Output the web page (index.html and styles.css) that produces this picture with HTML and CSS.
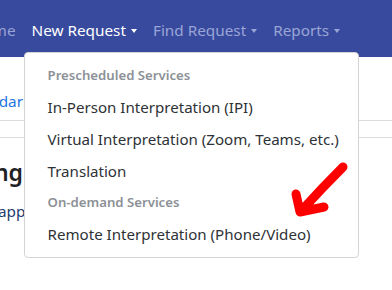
FILE: index.html
```html
<!DOCTYPE html>
<html lang="en">
<head>
<meta charset="utf-8">
<link rel="stylesheet" href="styles.css">
</head>
<body>
<nav class="navbar">
  <ul class="nav">
    <li class="nav-item home"><a class="nav-link">Home</a></li>
    <li class="nav-item open">
      <a class="nav-link active">New Request<span class="caret"></span></a>
      <div class="dropdown">
        <div class="dd-header">Prescheduled Services</div>
        <a class="dd-item">In-Person Interpretation (IPI)</a>
        <a class="dd-item">Virtual Interpretation (Zoom, Teams, etc.)</a>
        <a class="dd-item">Translation</a>
        <div class="dd-header">On-demand Services</div>
        <a class="dd-item">Remote Interpretation (Phone/Video)</a>
      </div>
    </li>
    <li class="nav-item"><a class="nav-link">Find Request<span class="caret"></span></a></li>
    <li class="nav-item"><a class="nav-link">Reports<span class="caret"></span></a></li>
  </ul>
</nav>
<main class="content">
  <div class="tabs">
    <div class="clip"><a class="tab-link">Calendar</a></div>
  </div>
  <div class="rule"></div>
  <div class="clip heading-row"><h2 class="heading">Upcoming</h2></div>
  <p class="lead">approved requests are listed below.</p>
</main>
<svg class="arrow" width="392" height="290" viewBox="0 0 392 290">
  <path d="M343 167 Q322 188 302 210 M296 194 L300 212 L324 207" fill="none" stroke="#ff0000" stroke-width="9" stroke-linecap="round" stroke-linejoin="round"/>
</svg>
</body>
</html>
```
FILE: styles.css
```css
* { box-sizing: border-box; }
html, body { margin: 0; padding: 0; }
body {
  width: 392px;
  height: 290px;
  overflow: hidden;
  position: relative;
  background: #fff;
  font-family: "Noto Sans", "Open Sans", sans-serif;
  font-size: 15px;
  color: #212529;
}
.navbar {
  height: 57px;
  background: #384a9e;
  padding: 10px 0 7px;
}
.nav {
  list-style: none;
  margin: 0 0 0 -36px;
  padding: 0;
  display: flex;
}
.nav-item { position: relative; }
.nav-link {
  display: flex;
  align-items: center;
  height: 40px;
  padding: 8px 8px;
  line-height: 24px;
  font-size: 15.3px;
  color: #9aa5d5;
  white-space: nowrap;
}
.nav-link.active { color: #fff; }
.caret {
  display: inline-block;
  margin-left: 5px;
  margin-top: 1px;
  width: 0;
  height: 0;
  border-left: 3.5px solid transparent;
  border-right: 3.5px solid transparent;
  border-top: 4px solid currentColor;
}
.dropdown {
  position: absolute;
  top: 42px;
  left: 0;
  width: 335px;
  z-index: 5;
  background: #fff;
  border: 1px solid #d4d4d4;
  border-radius: 4px;
  padding: 7px 0;
}
.dd-header {
  height: 31px;
  padding: 5px 23px;
  line-height: 21px;
  font-size: 13.2px;
  font-weight: 600;
  color: #8c9197;
  white-space: nowrap;
}
.dd-item {
  display: block;
  height: 32px;
  padding: 4px 23px;
  line-height: 24px;
  font-size: 15.1px;
  color: #2e3236;
  white-space: nowrap;
}
.content { position: relative; }
.clip {
  width: 23px;
  display: flex;
  justify-content: flex-end;
  white-space: nowrap;
}
.tabs {
  padding-top: 32px;
  padding-bottom: 7px;
  border-bottom: 1px solid #dcdcdc;
}
.tab-link {
  line-height: 24px;
  color: #1f74e0;
  font-size: 15.3px;
}
.rule {
  height: 17px;
  border-bottom: 1px solid #dcdcdc;
}
.heading-row { margin-top: 20px; }
.heading {
  margin: 0;
  font-size: 23px;
  line-height: 28px;
  font-weight: 600;
  color: #1e2125;
}
.lead {
  margin: 13px 0 0 -2px;
  line-height: 24px;
  font-size: 15.3px;
  color: #1d3d70;
  white-space: nowrap;
}
.arrow {
  position: absolute;
  left: 0;
  top: 0;
  z-index: 10;
  pointer-events: none;
}
```
